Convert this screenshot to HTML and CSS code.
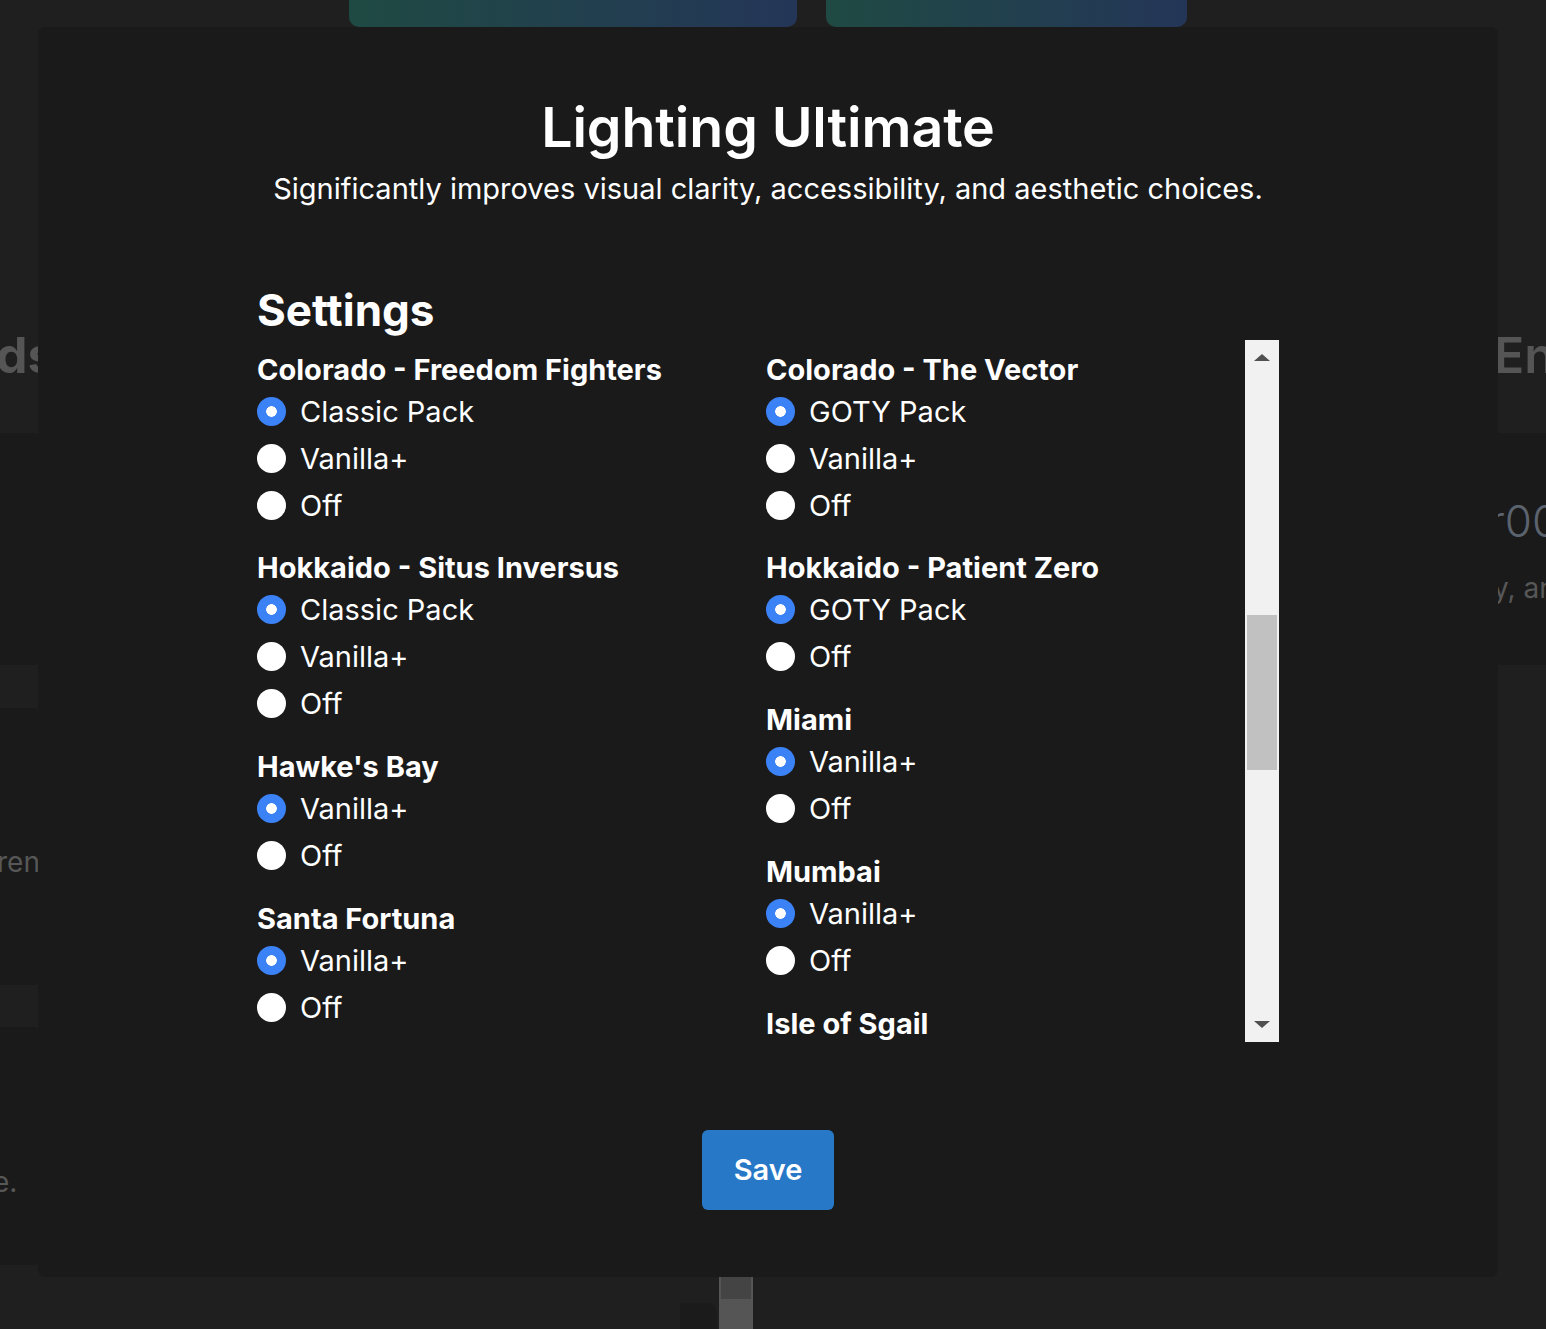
FILE: index.html
```html
<!DOCTYPE html>
<html lang="en">
<head>
<meta charset="utf-8">
<title>Lighting Ultimate</title>
<link rel="stylesheet" href="styles.css">
</head>
<body>
<div class="page">
  <div class="hero-row">
    <div class="hero-card hero-a"></div>
    <div class="hero-card hero-b"></div>
  </div>
  <div class="bg-columns">
    <div class="bg-col bg-left">
      <h2 class="bg-heading bg-heading-left">ds</h2>
      <div class="bg-card bg-card-left bg-card-1"></div>
      <div class="bg-card bg-card-left bg-card-2"><p class="bg-text bg-text-ren">ren</p></div>
      <div class="bg-card bg-card-left bg-card-3"><p class="bg-text bg-text-e">e.</p></div>
    </div>
    <div class="bg-col bg-mid">
      <div class="bg-dark-tab"></div>
      <div class="bg-scroll"><div class="bg-scroll-top"></div></div>
    </div>
    <div class="bg-col bg-right">
      <h2 class="bg-heading bg-heading-right">Enhancements</h2>
      <div class="bg-card bg-card-right">
        <p class="bg-price">r00</p>
        <p class="bg-text bg-text-desc">y, and aesthetic</p>
      </div>
    </div>
  </div>
</div>

<div class="modal">
  <h1 class="modal-title">Lighting Ultimate</h1>
  <p class="modal-subtitle">Significantly improves visual clarity, accessibility, and aesthetic choices.</p>

  <section class="settings">
    <h2 class="settings-title">Settings</h2>
    <div class="settings-scroll">
      <div class="settings-grid">
        <div class="settings-col">
          <div class="group">
            <h3 class="group-title">Colorado - Freedom Fighters</h3>
            <label class="option"><input type="radio" name="cff" checked><span>Classic Pack</span></label>
            <label class="option"><input type="radio" name="cff"><span>Vanilla+</span></label>
            <label class="option"><input type="radio" name="cff"><span>Off</span></label>
          </div>
          <div class="group">
            <h3 class="group-title">Hokkaido - Situs Inversus</h3>
            <label class="option"><input type="radio" name="hsi" checked><span>Classic Pack</span></label>
            <label class="option"><input type="radio" name="hsi"><span>Vanilla+</span></label>
            <label class="option"><input type="radio" name="hsi"><span>Off</span></label>
          </div>
          <div class="group">
            <h3 class="group-title">Hawke's Bay</h3>
            <label class="option"><input type="radio" name="hb" checked><span>Vanilla+</span></label>
            <label class="option"><input type="radio" name="hb"><span>Off</span></label>
          </div>
          <div class="group">
            <h3 class="group-title">Santa Fortuna</h3>
            <label class="option"><input type="radio" name="sf" checked><span>Vanilla+</span></label>
            <label class="option"><input type="radio" name="sf"><span>Off</span></label>
          </div>
          <div class="group">
            <h3 class="group-title">Whittleton Creek</h3>
            <label class="option"><input type="radio" name="wc" checked><span>Vanilla+</span></label>
            <label class="option"><input type="radio" name="wc"><span>Off</span></label>
          </div>
        </div>
        <div class="settings-col">
          <div class="group">
            <h3 class="group-title">Colorado - The Vector</h3>
            <label class="option"><input type="radio" name="ctv" checked><span>GOTY Pack</span></label>
            <label class="option"><input type="radio" name="ctv"><span>Vanilla+</span></label>
            <label class="option"><input type="radio" name="ctv"><span>Off</span></label>
          </div>
          <div class="group">
            <h3 class="group-title">Hokkaido - Patient Zero</h3>
            <label class="option"><input type="radio" name="hpz" checked><span>GOTY Pack</span></label>
            <label class="option"><input type="radio" name="hpz"><span>Off</span></label>
          </div>
          <div class="group">
            <h3 class="group-title">Miami</h3>
            <label class="option"><input type="radio" name="mia" checked><span>Vanilla+</span></label>
            <label class="option"><input type="radio" name="mia"><span>Off</span></label>
          </div>
          <div class="group">
            <h3 class="group-title">Mumbai</h3>
            <label class="option"><input type="radio" name="mum" checked><span>Vanilla+</span></label>
            <label class="option"><input type="radio" name="mum"><span>Off</span></label>
          </div>
          <div class="group">
            <h3 class="group-title">Isle of Sgail</h3>
            <label class="option"><input type="radio" name="ios" checked><span>Vanilla+</span></label>
            <label class="option"><input type="radio" name="ios"><span>Off</span></label>
          </div>
        </div>
      </div>
      <div class="scrollbar">
        <div class="sb-btn">
          <svg width="16" height="7" viewBox="0 0 16 7"><polygon points="0,7 8,0 16,7" fill="#505050"/></svg>
        </div>
        <div class="sb-track">
          <div class="sb-thumb" style="margin-top:240px;height:155px"></div>
        </div>
        <div class="sb-btn">
          <svg width="16" height="7" viewBox="0 0 16 7"><polygon points="0,0 16,0 8,7" fill="#505050"/></svg>
        </div>
      </div>
    </div>
  </section>

  <button class="save-btn" type="button">Save</button>
</div>
</body>
</html>
```

FILE: styles.css
```css
* { box-sizing: border-box; }

html, body {
  margin: 0;
  padding: 0;
}

body {
  background: #1f1f1f;
  font-family: Inter, "Noto Sans", sans-serif;
  height: 1329px;
  overflow: hidden;
  position: relative;
}

/* ---------- background page (dimmed) ---------- */
.page {
  width: 1546px;
  height: 1329px;
  overflow: hidden;
}

.hero-row {
  display: flex;
  gap: 29px;
  padding-left: 349px;
  height: 27px;
}

.hero-card {
  height: 27px;
  border-radius: 0 0 10px 10px;
  background: linear-gradient(90deg, #1f4a43, #243658);
}

.hero-a { width: 448px; }
.hero-b { width: 361px; }

.bg-columns {
  display: grid;
  grid-template-columns: 44px 1fr 50px;
}

.bg-col {
  display: flex;
  flex-direction: column;
  min-width: 0;
}

.bg-heading {
  margin: 298px 0 0;
  font-size: 50px;
  line-height: 60px;
  font-weight: 700;
  color: #555555;
  white-space: nowrap;
}

.bg-heading-left { margin-left: -4px; }
.bg-heading-right { margin-left: -2px; font-weight: 600; }

.bg-card {
  background: #1a1a1a;
  border-radius: 12px;
}

.bg-card-left {
  margin-left: -20px;
  padding-left: 20px;
}

.bg-card-1 { margin-top: 48px; height: 232px; }
.bg-card-2 { margin-top: 43px; height: 277px; padding-top: 137px; }
.bg-card-3 { margin-top: 42px; height: 238px; padding-top: 138px; }

.bg-text {
  margin: 0;
  font-size: 28px;
  line-height: 34px;
  color: #575757;
  white-space: nowrap;
}

.bg-text-ren { margin-left: -3px; }
.bg-text-e { margin-left: -7px; }

.bg-card-right {
  margin-top: 48px;
  margin-left: -20px;
  height: 232px;
  padding: 62px 0 0 13px;
  border-radius: 12px 0 0 12px;
}

.bg-price {
  margin: 0;
  font-size: 44px;
  line-height: 52px;
  font-weight: 300;
  color: #5b636e;
  white-space: nowrap;
}

.bg-text-desc {
  margin: 24px 0 0 4px;
}

.bg-mid {
  flex-direction: row;
  align-items: flex-start;
  padding-top: 1250px;
}

.bg-dark-tab {
  margin-left: 636px;
  margin-top: 26px;
  width: 37px;
  height: 40px;
  background: #1b1b1b;
  border-radius: 0 10px 0 0;
}

.bg-scroll {
  margin-left: 2px;
  width: 34px;
  height: 60px;
  background: #555555;
  padding: 0 2px;
}

.bg-scroll-top {
  height: 22px;
  background: #444444;
}

/* ---------- modal ---------- */
.modal {
  position: absolute;
  left: 38px;
  top: 27px;
  width: 1460px;
  height: 1250px;
  background: #1a1a1a;
  border-radius: 8px;
  display: flex;
  flex-direction: column;
  align-items: center;
  padding-top: 67px;
  color: #ffffff;
}

.modal-title {
  margin: 0;
  font-size: 55.5px;
  line-height: 66px;
  font-weight: 600;
  letter-spacing: -0.1px;
}

.modal-subtitle {
  margin: 12px 0 0;
  font-size: 29px;
  line-height: 34px;
  font-weight: 400;
}

.settings {
  width: 1022px;
  margin-top: 78px;
}

.settings-title {
  margin: 0;
  font-size: 44px;
  line-height: 53px;
  font-weight: 700;
}

.settings-scroll {
  margin-top: 2.5px;
  height: 702px;
  display: flex;
}

.settings-grid {
  flex: 1;
  min-width: 0;
  overflow: hidden;
  display: grid;
  grid-template-columns: 1fr 1fr;
  column-gap: 30px;
  align-items: start;
  padding-top: 11px;
}

.settings-col {
  display: flex;
  flex-direction: column;
}

.group {
  margin-bottom: 20.8px;
}

.group-title {
  margin: 0;
  font-size: 29px;
  line-height: 37px;
  font-weight: 700;
}

.option {
  display: flex;
  align-items: center;
  gap: 14px;
  height: 47px;
  font-size: 29px;
  font-weight: 400;
}

.option input {
  appearance: none;
  -webkit-appearance: none;
  margin: 0;
  width: 29px;
  height: 29px;
  border-radius: 50%;
  background: #ffffff;
  flex: none;
}

.option input:checked {
  background: radial-gradient(circle, #ffffff 0 5px, #3b82f6 5.6px);
}

/* ---------- custom scrollbar ---------- */
.scrollbar {
  width: 34px;
  flex: none;
  background: #f1f1f1;
  display: flex;
  flex-direction: column;
}

.sb-btn {
  height: 35px;
  display: flex;
  align-items: center;
  justify-content: center;
  flex: none;
}

.sb-track {
  flex: 1;
  padding: 0 2px;
}

.sb-thumb {
  background: #c1c1c1;
}

/* ---------- save ---------- */
.save-btn {
  margin-top: 88px;
  width: 132px;
  height: 80px;
  border: 0;
  border-radius: 6px;
  background: #2878c8;
  color: #ffffff;
  font-family: Inter, "Noto Sans", sans-serif;
  font-size: 29px;
  font-weight: 600;
}
```
